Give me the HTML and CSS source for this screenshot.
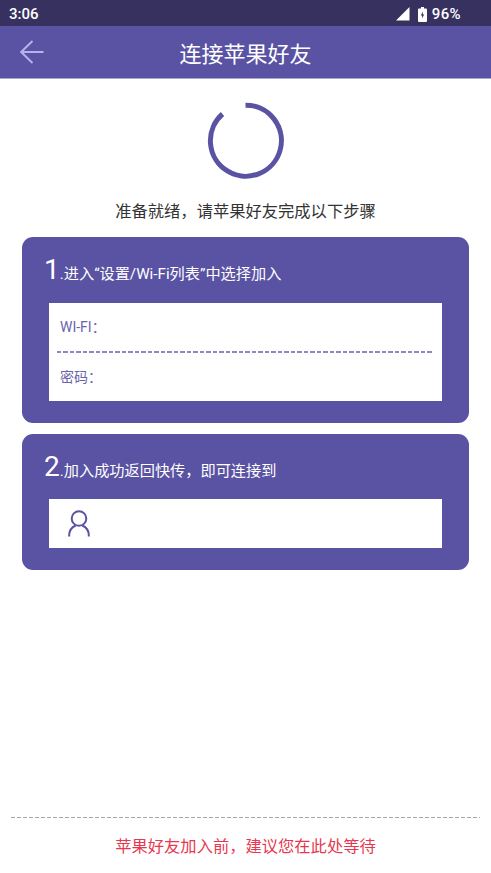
FILE: index.html
```html
<!DOCTYPE html>
<html lang="zh-CN">
<head>
    <meta charset="UTF-8">
    <meta name="viewport" content="width=device-width, initial-scale=1.0">
    <title>连接苹果好友</title>
    <link rel="stylesheet" href="styles.css">
</head>
<body>
    <!-- Status bar -->
    <div class="status-bar">
        <span class="status-time">3:06</span>
        <div class="status-right">
            <svg class="signal-icon" width="14" height="14" viewBox="0 0 14 14"><polygon points="0,13.500 13.500,13.500 13.500,0" fill="#fff"/></svg>
            <svg class="battery-icon" width="9" height="15" viewBox="0 0 9 15">
                <path d="M3 0h3v1.500h2a1 1 0 0 1 1 1V14a1 1 0 0 1-1 1H1a1 1 0 0 1-1-1V2.500a1 1 0 0 1 1-1h2z" fill="#fff"/>
                <polygon points="5,4.500 2.800,8.500 4.200,8.500 4,11.500 6.200,7.500 4.800,7.500" fill="#36315f"/>
            </svg>
            <span class="status-battery">96%</span>
        </div>
    </div>

    <!-- Title bar -->
    <header class="title-bar">
        <svg class="back-icon" width="24" height="24" viewBox="0 0 24 24"><path d="M12.500 1 1.200 12 12.500 23M1.200 12H23.500" fill="none" stroke="#b9b1ee" stroke-width="1.900"/></svg>
        <h1>连接苹果好友</h1>
    </header>

    <!-- Main content -->
    <main class="content">
        <svg class="spinner" width="78" height="78" viewBox="0 0 78 78">
            <path d="M38.500 3.200A35.500 35.500 0 1 1 15.500 12" fill="none" stroke="#5a53a3" stroke-width="5"/>
        </svg>
        <p class="ready-text">准备就绪，请苹果好友完成以下步骤</p>

        <section class="step-card step-one">
            <div class="step-title"><span class="step-num">1</span>.进入“设置/Wi-Fi列表”中选择加入</div>
            <div class="info-box">
                <div class="info-row">WI-FI：</div>
                <div class="info-line"></div>
                <div class="info-row">密码：</div>
            </div>
        </section>

        <section class="step-card step-two">
            <div class="step-title"><span class="step-num">2</span>.加入成功返回快传，即可连接到</div>
            <div class="friend-box">
                <svg width="22" height="27" viewBox="0 0 22 27">
                    <circle cx="11" cy="8.500" r="7.300" fill="none" stroke="#5a53a3" stroke-width="2"/>
                    <path d="M1.200 26.500v-1c0-5 3-8.500 6.500-10M20.800 26.500v-1c0-5-3-8.500-6.500-10" fill="none" stroke="#5a53a3" stroke-width="2"/>
                </svg>
            </div>
        </section>
    </main>

    <!-- Footer -->
    <footer class="wait-note">苹果好友加入前，建议您在此处等待</footer>
</body>
</html>
```

FILE: styles.css
```css
* {
    margin: 0;
    padding: 0;
    box-sizing: border-box;
}

body {
    width: 491px;
    height: 873px;
    display: flex;
    flex-direction: column;
    background: #fff;
    font-family: Roboto, "Noto Sans CJK SC", sans-serif;
    overflow: hidden;
}

/* Status bar */
.status-bar {
    height: 26px;
    flex-shrink: 0;
    display: flex;
    justify-content: space-between;
    align-items: center;
    padding: 2px 30px 0 9px;
    background: #36315f;
    color: #fff;
    font-size: 15px;
    font-weight: 500;
}

.status-right {
    display: flex;
    align-items: center;
    gap: 8px;
}

.status-battery {
    margin-left: -3px;
    letter-spacing: 0.4px;
}

/* Title bar */
.title-bar {
    height: 53px;
    flex-shrink: 0;
    position: relative;
    display: flex;
    justify-content: center;
    align-items: center;
    background: #5a53a3;
    border-bottom: 1px solid #a9a4d4;
}

.title-bar h1 {
    color: #fff;
    font-size: 22px;
    font-weight: 400;
}

.back-icon {
    position: absolute;
    left: 19.500px;
    top: 14px;
}

/* Main content */
.content {
    flex-grow: 1;
    display: flex;
    flex-direction: column;
    align-items: center;
    padding: 23px 22px 0;
}

.spinner {
    display: block;
}

.ready-text {
    margin-top: 20px;
    height: 24px;
    line-height: 24px;
    color: #333;
    font-size: 16.300px;
}

.step-card {
    width: 100%;
    background: #5a53a3;
    border-radius: 11px;
    padding: 0 27px;
}

.step-one {
    height: 186px;
    margin-top: 13px;
}

.step-two {
    height: 136px;
    margin-top: 11px;
}

.step-title {
    height: 66px;
    display: flex;
    align-items: baseline;
    padding-top: 16px;
    margin-left: -5px;
    color: #fff;
    font-size: 15.200px;
}

.step-two .step-title {
    height: 65px;
}

.step-num {
    font-size: 28px;
    font-weight: 400;
}

.info-box {
    height: 98px;
    background: #fff;
    padding: 0 8px;
    color: #6a64ad;
    font-size: 14px;
}

.info-row {
    height: 48px;
    line-height: 48px;
    padding-left: 3px;
}

.info-line {
    height: 2px;
    background: repeating-linear-gradient(90deg, #8d88c4 0 4.500px, transparent 4.500px 6.500px);
}

.friend-box {
    height: 49px;
    background: #fff;
    padding-left: 19px;
    display: flex;
    align-items: center;
}

/* Footer */
.wait-note {
    height: 56px;
    flex-shrink: 0;
    margin: 0 11px;
    background: repeating-linear-gradient(90deg, #a8a8a8 0 4px, transparent 4px 6px) top / 100% 1px no-repeat;
    padding-top: 16px;
    text-align: center;
    color: #e6394f;
    font-size: 16.300px;
}
```
